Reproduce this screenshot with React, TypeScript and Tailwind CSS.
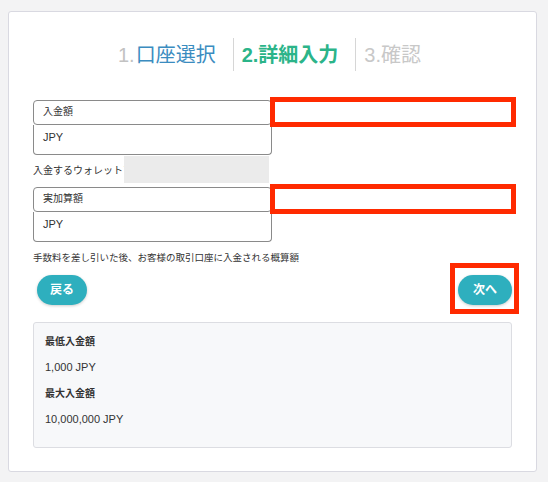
import React from "react";

const FONT = { fontFamily: '"Liberation Sans", "Noto Sans CJK JP", sans-serif' };

function RedBox({ className }: { className: string }) {
  return <div className={"absolute border-[5px] border-[#ff2a00] pointer-events-none " + className} />;
}

function Field({ label, redTop }: { label: string; redTop: string }) {
  return (
    <div className="relative w-[239px]">
      <div className="h-[25px] w-[239px] border border-[#8a8a8a] rounded-[4px] bg-white flex items-center pl-[9px] pb-[2px] text-[10px] text-[#333]">
        {label}
      </div>
      <div className="h-[30px] w-[239px] border border-[#8a8a8a] border-t-0 rounded-b-[4px] bg-white flex items-center pl-[9px] pb-[4px] text-[11px] text-[#333]">
        JPY
      </div>
      <RedBox className={"left-[237px] w-[246px] h-[30px] " + redTop} />
    </div>
  );
}

export default function App() {
  return (
    <div className="min-h-[482px] bg-[#f3f3f4] pt-[11px] pl-[8px]" style={FONT}>
      <div className="w-[529px] bg-white border border-[#d9d9e1] rounded-[3px] pt-[26px] px-[24px] pb-[23px]">
        {/* Steps */}
        <div className="flex justify-center h-[33px] items-stretch ml-[-6px]">
          <div className="flex items-center pr-[17px] border-r border-[#d6d6d6] text-[20px] leading-none">
            <span className="text-[#c2c2c2]">1.</span>
            <span className="text-[#3b8cc0] ml-[1px]">口座選択</span>
          </div>
          <div className="flex items-center pl-[8px] pr-[17px] border-r border-[#d6d6d6] text-[20px] leading-none font-bold text-[#2bb489]">
            2.詳細入力
          </div>
          <div className="flex items-center pl-[8px] text-[20px] leading-none text-[#c8c8c8]">
            3.確認
          </div>
        </div>

        {/* Form */}
        <div className="mt-[29px]">
          <Field label="入金額" redTop="top-[-3px]" />
          <div className="relative h-[28px] flex items-center pt-[3px] text-[10px] text-[#333] whitespace-nowrap overflow-hidden w-[239px]">
            入金するウォレットアドレス
            <div className="absolute left-[91px] top-[1px] w-[145px] h-[27px] bg-[#ebebeb]" />
          </div>
          <div className="mt-[4px]">
            <Field label="実加算額" redTop="top-[-3px]" />
          </div>
          <div className="mt-[8px] h-[16px] flex items-center text-[9.5px] text-[#333] whitespace-nowrap">
            手数料を差し引いた後、お客様の取引口座に入金される概算額
          </div>
        </div>

        {/* Buttons */}
        <div className="mt-[9px] flex justify-between items-center">
          <button className="ml-[4px] w-[50px] h-[30px] rounded-full bg-[#2eafbe] text-white text-[12px] font-semibold shadow-[0_1px_3px_rgba(0,0,0,0.2)]">
            戻る
          </button>
          <div className="relative">
            <button className="w-[54px] h-[30px] rounded-full bg-[#2eafbe] text-white text-[12px] font-semibold shadow-[0_1px_3px_rgba(0,0,0,0.2)]">
              次へ
            </button>
            <RedBox className="left-[-8px] top-[-12px] w-[69px] h-[51px]" />
          </div>
        </div>

        {/* Info */}
        <div className="mt-[17px] h-[126px] bg-[#f7f8fa] border border-[#dcdde2] rounded-[3px] pl-[11px] pt-[5px] text-[#333]">
          <div className="h-[26px] flex items-center text-[10px] font-bold">最低入金額</div>
          <div className="h-[26px] flex items-center text-[11px]">1,000 JPY</div>
          <div className="h-[26px] flex items-center text-[10px] font-bold">最大入金額</div>
          <div className="h-[26px] flex items-center text-[11px]">10,000,000 JPY</div>
        </div>
      </div>
    </div>
  );
}
